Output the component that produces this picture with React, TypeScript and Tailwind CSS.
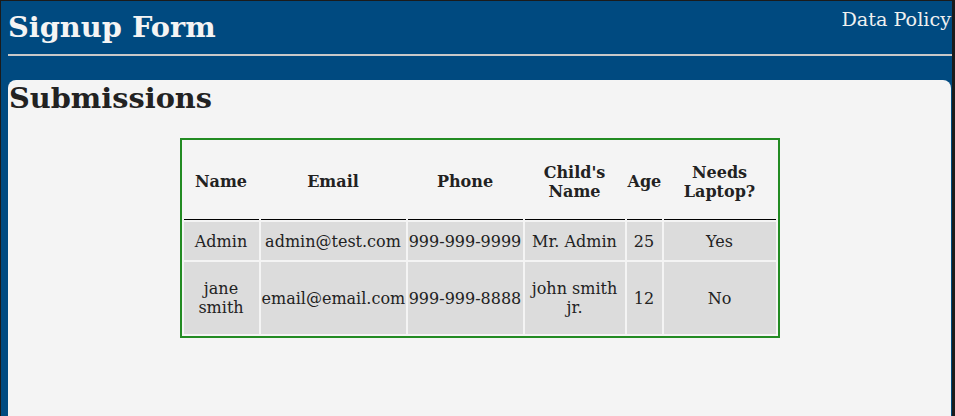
export default function App() {
  const rows = [
    ["Admin", "admin@test.com", "999-999-9999", "Mr. Admin", "25", "Yes"],
    ["jane smith", "email@email.com", "999-999-8888", "john smith jr.", "12", "No"],
  ];
  const heights = ["h-[38px]", "h-[72px]"];
  return (
    <div
      className="min-h-[416px] flex flex-col bg-[#004a80] border-t border-l border-r-[3px] border-[#1b1b1b] text-[#222]"
      style={{ fontFamily: '"DejaVu Serif", serif' }}
    >
      <div className="flex justify-between items-start pl-[7px] pt-[8px]">
        <h1 className="text-[28.8px] leading-[34px] mt-[1px] font-bold text-[#f4f4f4]">Signup Form</h1>
        <a className="text-[19.2px] leading-[22px] mr-[1px] text-[#f0f0f0]">Data Policy</a>
      </div>
      <div className="ml-[7px] mt-[10px] h-[2px] bg-[#c8c8c8]" />
      <div className="ml-[7px] mr-[1px] mt-[24px] flex-1 bg-[#f4f4f4] rounded-t-[8px] pt-[1px]">
        <h2 className="text-[28.8px] leading-[34px] font-bold text-[#222] pl-[1px]">Submissions</h2>
        <table className="mx-auto mt-[23px] w-[600px] table-fixed border-separate border-spacing-[2px] border-2 border-[#228b22] text-[16px] leading-[19px] text-center">
          <thead>
            <tr>
              {[
                ["Name", "w-[75px]"],
                ["Email", "w-[145px]"],
                ["Phone", "w-[115px]"],
                ["Child's Name", "w-[100px]"],
                ["Age", "w-[35px]"],
                ["Needs Laptop?", "w-[112px]"],
              ].map(([t, w]) => (
                <th key={t} className={`${w} h-[78px] px-[1px] pt-[2px] font-bold border-b border-black align-middle`}>
                  {t}
                </th>
              ))}
            </tr>
          </thead>
          <tbody>
            {rows.map((r, i) => (
              <tr key={i}>
                {r.map((c, j) => (
                  <td key={j} className={`${heights[i]} px-[1px] bg-[#dcdcdc] align-middle`}>
                    {c}
                  </td>
                ))}
              </tr>
            ))}
          </tbody>
        </table>
      </div>
    </div>
  );
}
